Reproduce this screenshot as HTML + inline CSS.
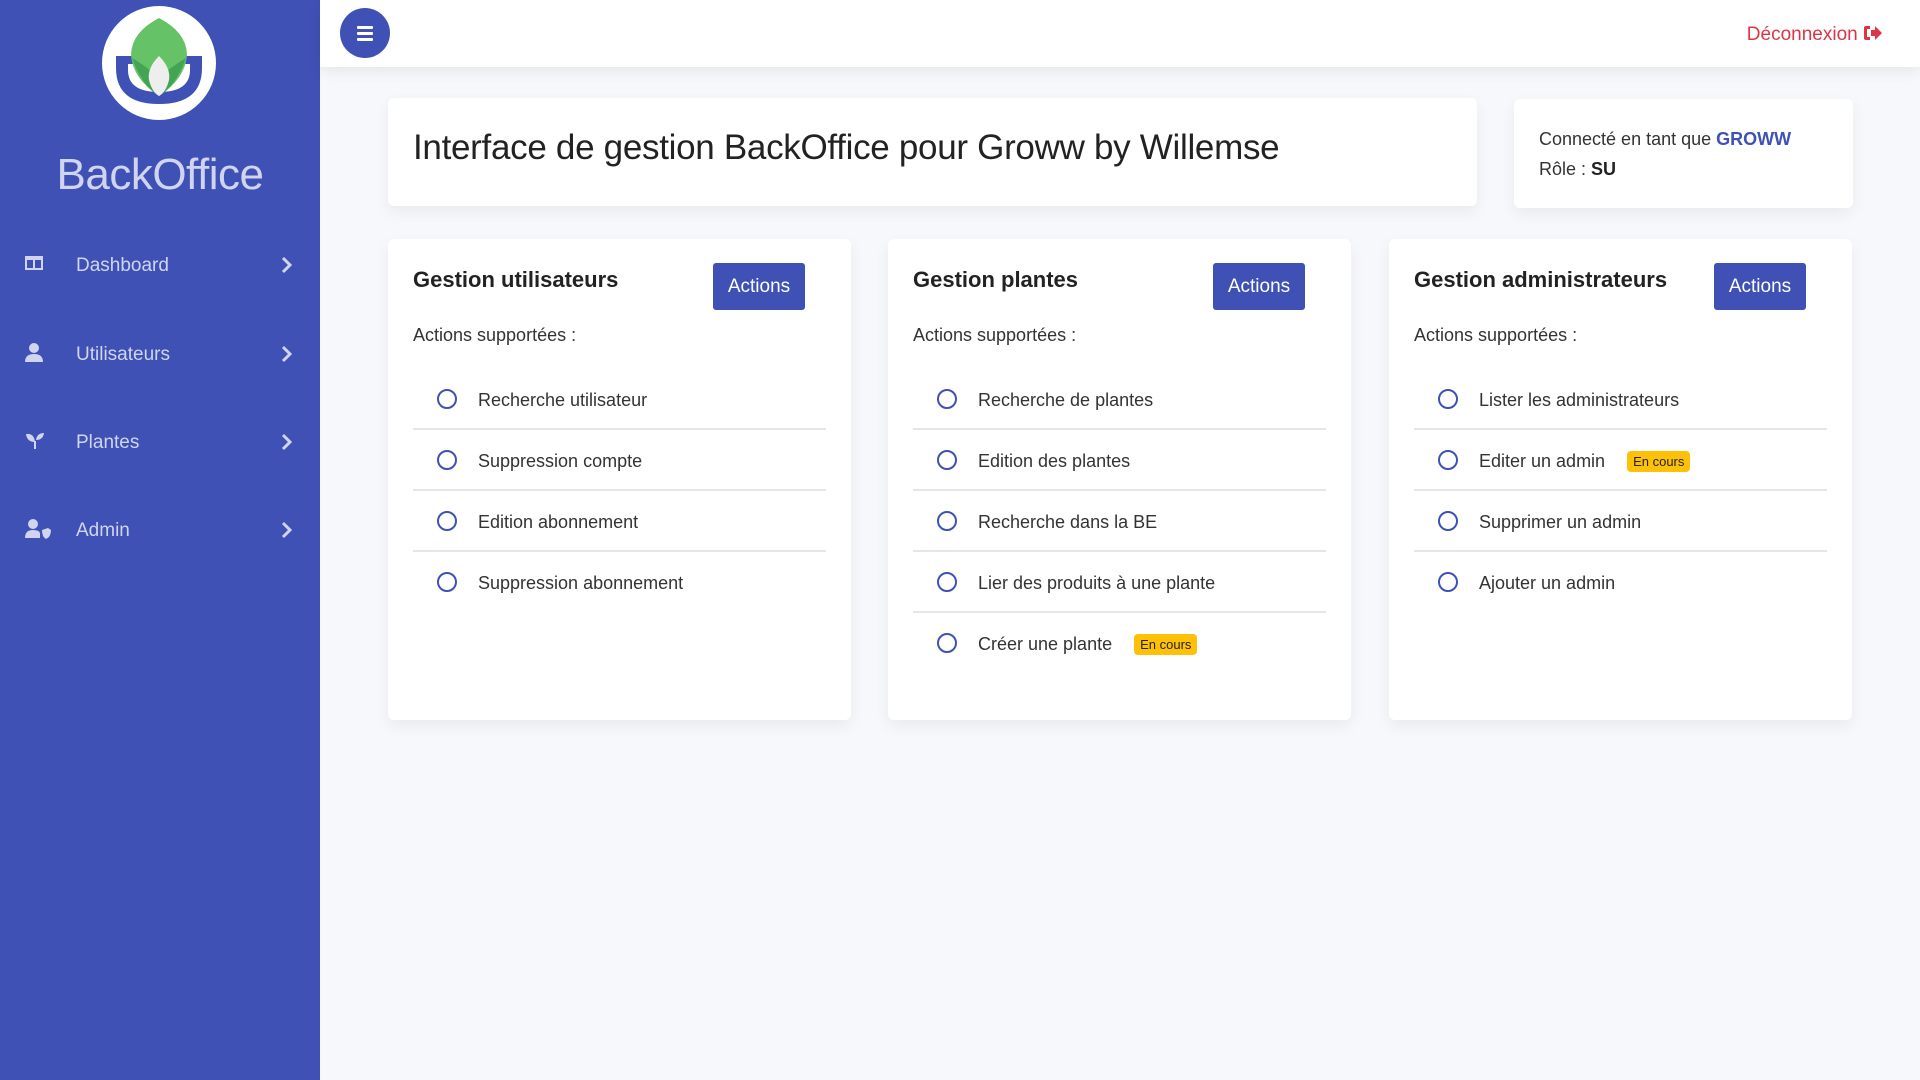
<!DOCTYPE html>
<html><head><meta charset="utf-8"><style>
*{box-sizing:border-box;margin:0;padding:0}
body{width:1920px;height:1080px;overflow:hidden;background:#f7f8fc;font-family:"Liberation Sans",sans-serif;color:#222;position:relative}
.side{position:absolute;left:0;top:0;width:320px;height:1080px;background:#3f51b5}
.logo{position:absolute;left:102px;top:6px;width:114px;height:114px;border-radius:50%;background:#fff}
.bo{position:absolute;left:0;width:320px;top:150px;text-align:center;color:#d0d4ee;font-size:44px;font-weight:300;letter-spacing:-0.5px}
.nav{position:absolute;left:0;width:320px;height:40px;color:#d0d4ee;font-size:19px}
.nav .ic{position:absolute;left:24px;top:8px}
.nav .t{position:absolute;left:76px;top:10px}
.nav .ch{position:absolute;left:280px;top:10px}
.top{position:absolute;left:320px;top:0;right:0;height:67px;background:#fff;box-shadow:0 4px 14px rgba(0,0,0,.08)}
.ham{position:absolute;left:340px;top:8px;width:50px;height:50px;border-radius:50%;background:#3f51b5}
.ham i{position:absolute;left:17px;width:16px;height:3px;background:#fff;border-radius:1px}
.dec{position:absolute;right:37px;top:24px;color:#dc3545;font-size:19px}
.card{position:absolute;background:#fff;border-radius:6px;box-shadow:0 6px 16px rgba(0,0,0,.06)}
.title{left:388px;top:98px;width:1089px;height:108px}
.title h1{position:absolute;left:25px;top:30px;font-size:35px;font-weight:300;color:#222;letter-spacing:-0.3px}
.info{left:1514px;top:99px;width:339px;height:109px;font-size:18px;color:#333}
.g{top:239px;width:463px;height:481px}
.g h2{position:absolute;left:25px;top:28px;font-size:22px;font-weight:bold;color:#222}
.btn{position:absolute;left:325px;top:24px;width:92px;height:47px;background:#3f51b5;color:#fff;border-radius:3px;font-size:19px;text-align:center;line-height:47px}
.sup{position:absolute;left:25px;top:86px;font-size:18px;color:#333}
.li{position:absolute;left:25px;width:413px;height:61px;border-bottom:2px solid #e6e6ea}
.li .c{position:absolute;left:24px;top:20px;width:20px;height:20px;border:2px solid #3f51b5;border-radius:50%}
.li .x{position:absolute;left:65px;top:21px;font-size:18px;color:#333}
.badge{display:inline-block;margin-left:22px;background:#ffc107;color:#222;font-size:13px;padding:3px 6px;border-radius:4px;vertical-align:1px}
</style></head><body>
<div class="side">
 <div class="logo"><svg width="114" height="114" viewBox="0 0 114 114">
  <path d="M14 50 H100 V62 Q100 98 57 98 Q14 98 14 62 Z M26 58 V64 Q26 86 57 86 Q88 86 88 64 V58 Z" fill="#3f51b5" fill-rule="evenodd"/>
  <path d="M57 12 Q30 26 29 48 Q30 72 57 90 Q84 72 85 48 Q84 26 57 12Z" fill="#66c266"/>
  <path d="M30 52 Q40 80 57 90 Q74 80 84 52 Q70 60 57 72 Q44 60 30 52Z" fill="#43a454"/>
  <path d="M57 50 Q45 62 47 74 Q50 86 57 90 Q64 86 67 74 Q69 62 57 50Z" fill="#eeeeee"/>
 </svg></div>
 <div class="bo">BackOffice</div>
 <div class="nav" style="top:245px"><svg class="ic" width="20" height="20" viewBox="0 0 20 20"><rect x="1" y="3" width="18" height="14" fill="#d0d4ee"/><rect x="3" y="7" width="6" height="8" fill="#3f51b5"/><rect x="11" y="7" width="6" height="8" fill="#3f51b5"/></svg><span class="t">Dashboard</span><svg class="ch" width="14" height="20" viewBox="0 0 14 20"><path d="M3 3 L10 10 L3 17" stroke="#d0d4ee" stroke-width="3" fill="none"/></svg></div>
 <div class="nav" style="top:334px"><svg class="ic" width="20" height="22" viewBox="0 0 20 22"><circle cx="10" cy="6" r="5" fill="#d0d4ee"/><path d="M1 20 Q1 12 10 12 Q19 12 19 20Z" fill="#d0d4ee"/></svg><span class="t">Utilisateurs</span><svg class="ch" width="14" height="20" viewBox="0 0 14 20"><path d="M3 3 L10 10 L3 17" stroke="#d0d4ee" stroke-width="3" fill="none"/></svg></div>
 <div class="nav" style="top:422px"><svg class="ic" width="22" height="22" viewBox="0 0 22 22"><path d="M2 4 Q10 3 11 12 Q3 12 2 4Z M20 3 Q19 10 12 10 Q13 3 20 3Z M10 11 H12 V19 H10Z" fill="#d0d4ee"/></svg><span class="t">Plantes</span><svg class="ch" width="14" height="20" viewBox="0 0 14 20"><path d="M3 3 L10 10 L3 17" stroke="#d0d4ee" stroke-width="3" fill="none"/></svg></div>
 <div class="nav" style="top:510px"><svg class="ic" width="28" height="22" viewBox="0 0 28 22"><circle cx="9" cy="6" r="5" fill="#d0d4ee"/><path d="M1 20 Q1 12 9 12 Q15 12 16 15 V20Z" fill="#d0d4ee"/><path d="M18 12 L24 10 L27 12 Q27 19 22 21 Q18 19 18 12Z" fill="#d0d4ee"/></svg><span class="t">Admin</span><svg class="ch" width="14" height="20" viewBox="0 0 14 20"><path d="M3 3 L10 10 L3 17" stroke="#d0d4ee" stroke-width="3" fill="none"/></svg></div>
</div>
<div class="top"></div>
<div class="ham"><i style="top:18px"></i><i style="top:24px"></i><i style="top:30px"></i></div>
<div class="dec">Déconnexion <svg width="20" height="18" viewBox="0 0 20 18" style="vertical-align:-2px"><path d="M7 2 H3 Q1 2 1 4 V14 Q1 16 3 16 H7 V13 H4 V5 H7Z M8 6 H12 V2 L19 9 L12 16 V12 H8Z" fill="#dc3545"/></svg></div>
<div class="card title"><h1>Interface de gestion BackOffice pour Groww by Willemse</h1></div>
<div class="card info"><div style="position:absolute;left:25px;top:30px">Connecté en tant que <b style="color:#3f51b5">GROWW</b></div><div style="position:absolute;left:25px;top:60px">Rôle : <b style="color:#222">SU</b></div></div>

<div class="card g" style="left:388px"><h2>Gestion utilisateurs</h2><div class="btn">Actions</div><div class="sup">Actions supportées :</div>
<div class="li" style="top:130px"><div class="c"></div><div class="x">Recherche utilisateur</div></div>
<div class="li" style="top:191px"><div class="c"></div><div class="x">Suppression compte</div></div>
<div class="li" style="top:252px"><div class="c"></div><div class="x">Edition abonnement</div></div>
<div class="li" style="top:313px;border:none"><div class="c"></div><div class="x">Suppression abonnement</div></div>
</div>
<div class="card g" style="left:888px"><h2>Gestion plantes</h2><div class="btn">Actions</div><div class="sup">Actions supportées :</div>
<div class="li" style="top:130px"><div class="c"></div><div class="x">Recherche de plantes</div></div>
<div class="li" style="top:191px"><div class="c"></div><div class="x">Edition des plantes</div></div>
<div class="li" style="top:252px"><div class="c"></div><div class="x">Recherche dans la BE</div></div>
<div class="li" style="top:313px"><div class="c"></div><div class="x">Lier des produits à une plante</div></div>
<div class="li" style="top:374px;border:none"><div class="c"></div><div class="x">Créer une plante<span class="badge">En cours</span></div></div>
</div>
<div class="card g" style="left:1389px"><h2>Gestion administrateurs</h2><div class="btn">Actions</div><div class="sup">Actions supportées :</div>
<div class="li" style="top:130px"><div class="c"></div><div class="x">Lister les administrateurs</div></div>
<div class="li" style="top:191px"><div class="c"></div><div class="x">Editer un admin<span class="badge">En cours</span></div></div>
<div class="li" style="top:252px"><div class="c"></div><div class="x">Supprimer un admin</div></div>
<div class="li" style="top:313px;border:none"><div class="c"></div><div class="x">Ajouter un admin</div></div>
</div>
</body></html>
